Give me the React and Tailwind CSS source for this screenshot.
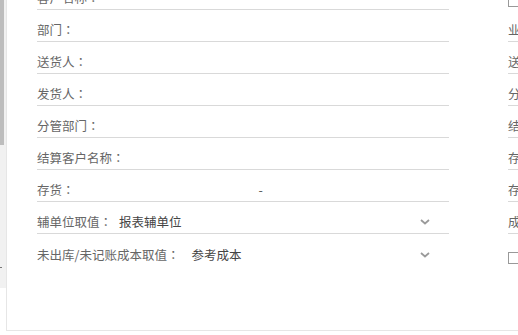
import React from 'react';

const leftRows = [
  { label: '客户名称' },
  { label: '部门' },
  { label: '送货人' },
  { label: '发货人' },
  { label: '分管部门' },
  { label: '结算客户名称' },
  { label: '存货', range: true },
  { label: '辅单位取值', value: '报表辅单位', gap: 'ml-[7px]', select: true },
  { label: '未出库/未记账成本取值', value: '参考成本', gap: 'ml-[12px]', select: true, last: true },
];

const rightRows = ['业务员', '送货地址', '分管人员', '结算方式', '存货分类', '存货编码', '成本取值'];

function Colon() {
  return <span className="font-['Noto_Sans_CJK_TC',sans-serif]">：</span>;
}

function Chevron() {
  return (
    <svg width="10" height="6" viewBox="0 0 10 6" className="shrink-0">
      <path d="M1 1 L5 4.5 L9 1" fill="none" stroke="#9a9a9a" strokeWidth="1.8" />
    </svg>
  );
}

function Row({ row }) {
  return (
    <div className={`h-[32px] flex items-end pb-[3px] text-[12.5px] leading-[16px] ${row.last ? '' : 'border-b border-[#d9d9d9]'}`}>
      <span className="text-[#666] whitespace-nowrap">
        {row.label}
        <Colon />
      </span>
      {row.value && <span className={`${row.gap} text-[#444] whitespace-nowrap`}>{row.value}</span>}
      {row.range && <span className="ml-[184px] text-[#555]">-</span>}
      {row.select && (
        <div className="ml-auto mr-[19px] mb-[5px]">
          <Chevron />
        </div>
      )}
    </div>
  );
}

export default function App() {
  return (
    <div className="w-[518px] h-[335px] overflow-hidden bg-white flex font-['Microsoft_YaHei','Noto_Sans_CJK_SC',sans-serif]">
      {/* outer scroll track */}
      <div className="w-[6px] shrink-0 flex flex-col">
        <div className="h-[288px] bg-[#f1f1f1] flex flex-col">
          <div className="w-[4px] h-[145px] bg-[#bdbdbd]" />
          <div className="mt-[122px] w-[2px] h-[1px] bg-[#777]" />
        </div>
      </div>

      <div className="flex-1 h-[331px] border-l border-b border-[#e6e6e6] flex overflow-hidden">
        <div className="w-[442px] shrink-0 pl-[30px] -mt-[22px]">
          <div className="w-[412px]">
            {leftRows.map((r, i) => (
              <Row key={i} row={r} />
            ))}
          </div>
        </div>

        <div className="ml-[59px] w-[200px] shrink-0 -mt-[22px] text-[12.5px] leading-[16px] text-[#666]">
          <div className="h-[32px] flex items-end pb-[3px]">
            <div className="w-[12px] h-[12px] border border-[#999] bg-white" />
          </div>
          {rightRows.map((t) => (
            <div key={t} className="h-[32px] flex items-end pb-[3px] border-b border-[#d9d9d9] whitespace-nowrap">
              {t}
              <Colon />
            </div>
          ))}
          <div className="h-[32px] flex items-end pb-[2px]">
            <div className="w-[12px] h-[12px] border border-[#999] bg-white" />
          </div>
        </div>
      </div>
    </div>
  );
}
